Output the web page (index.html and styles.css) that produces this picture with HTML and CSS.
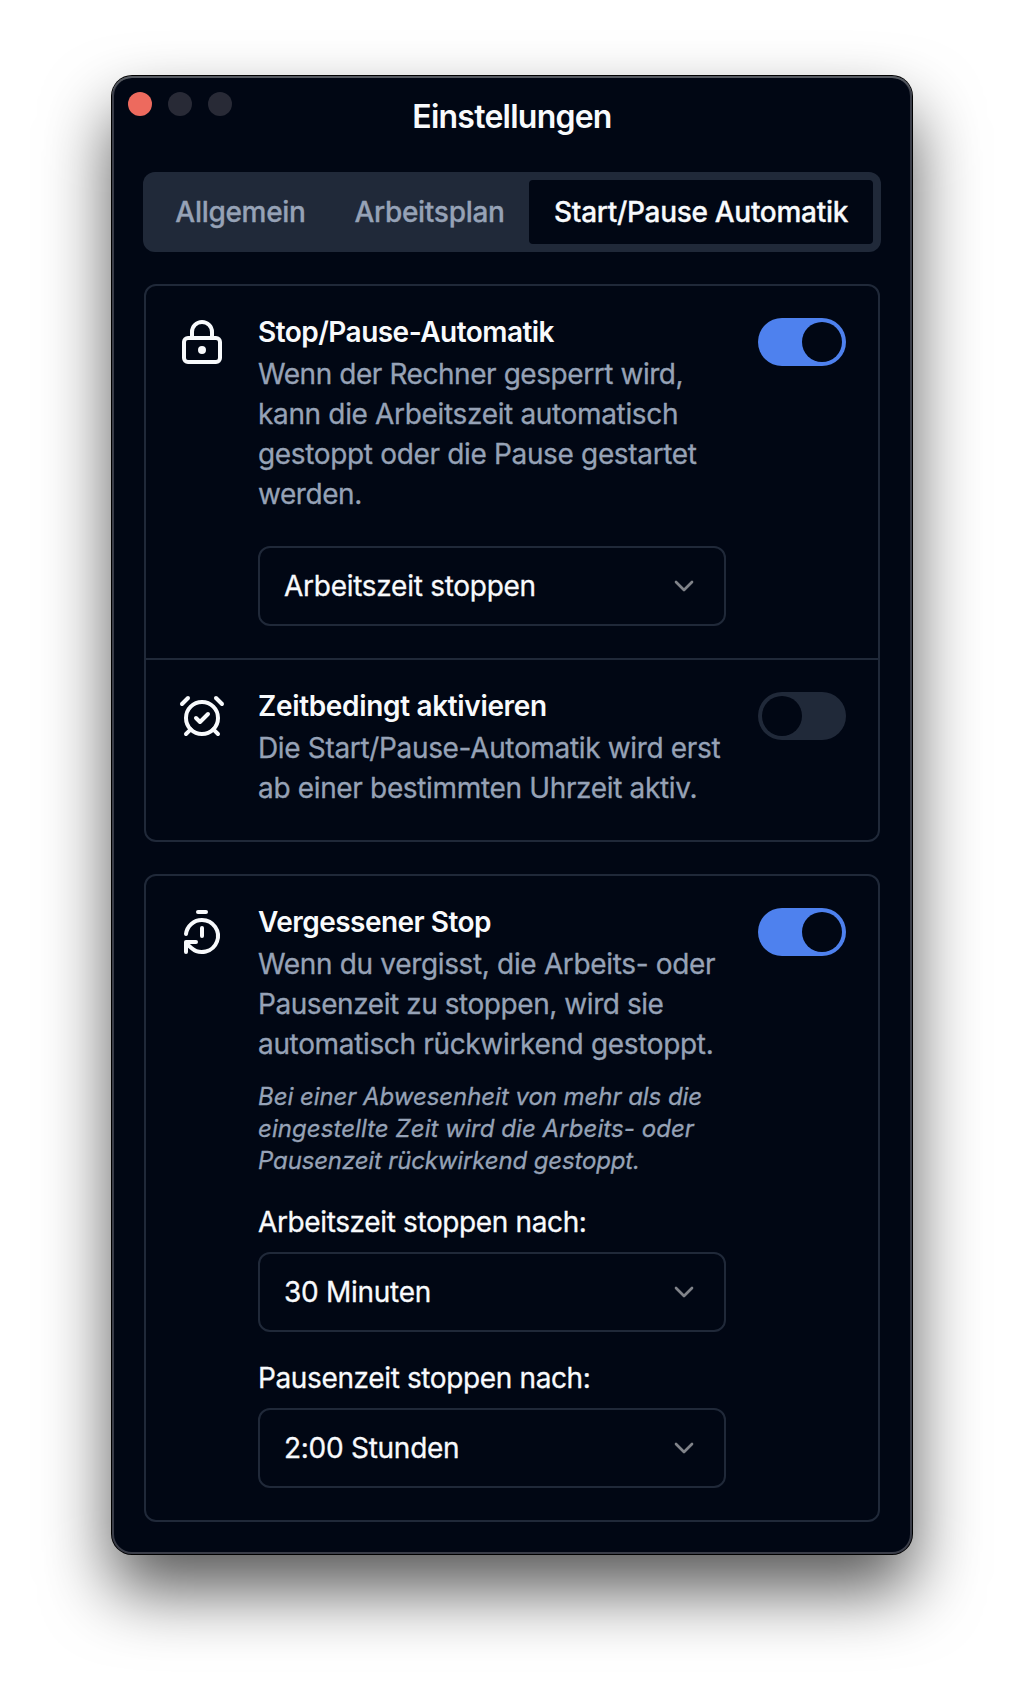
FILE: index.html
```
<!DOCTYPE html>
<html lang="de">
<head>
<meta charset="utf-8">
<title>Einstellungen</title>
<link rel="stylesheet" href="styles.css">
</head>
<body>
<main class="window">
  <div class="controls">
    <span class="dot dot-close"></span><span class="dot"></span><span class="dot"></span>
  </div>
  <h1 class="title">Einstellungen</h1>

  <nav class="tabs">
    <button class="tab">Allgemein</button>
    <button class="tab">Arbeitsplan</button>
    <button class="tab tab-active">Start/Pause Automatik</button>
  </nav>

  <section class="card">
    <div class="item">
      <svg class="icon" viewBox="0 0 24 24"><circle cx="12" cy="16" r="1"/><rect x="3" y="10" width="18" height="12" rx="2"/><path d="M7 10V7a5 5 0 0 1 10 0v3"/></svg>
      <div class="content">
        <h2 class="heading">Stop/Pause-Automatik</h2>
        <p class="text"><span class="line tight">Wenn der Rechner gesperrt wird,</span> <span class="line">kann die Arbeitszeit automatisch</span> <span class="line">gestoppt oder die Pause gestartet</span> <span class="line tight">werden.</span></p>
        <div class="select select-spaced">Arbeitszeit stoppen<svg class="chevron" viewBox="0 0 24 24"><path d="m6 9 6 6 6-6"/></svg></div>
      </div>
      <span class="switch switch-on"><span class="thumb"></span></span>
    </div>
    <div class="item">
      <svg class="icon" viewBox="0 0 24 24"><circle cx="12" cy="13" r="8"/><path d="M5 3 2 6"/><path d="m22 6-3-3"/><path d="M6.38 18.7 4 21"/><path d="M17.64 18.67 20 21"/><path d="m9 13 2 2 4-4"/></svg>
      <div class="content">
        <h2 class="heading heading-wide">Zeitbedingt aktivieren</h2>
        <p class="text"><span class="line">Die Start/Pause-Automatik wird erst</span> <span class="line">ab einer bestimmten Uhrzeit aktiv.</span></p>
      </div>
      <span class="switch"><span class="thumb"></span></span>
    </div>
  </section>

  <section class="card">
    <div class="item">
      <svg class="icon" viewBox="0 0 24 24"><path d="M10 2h4"/><path d="M12 14v-4"/><path d="M4 13a8 8 0 0 1 8-7 8 8 0 1 1-5.3 14L4 17.6"/><path d="M9 17H4v5"/></svg>
      <div class="content">
        <h2 class="heading">Vergessener Stop</h2>
        <p class="text"><span class="line">Wenn du vergisst, die Arbeits- oder</span> <span class="line tight">Pausenzeit zu stoppen, wird sie</span> <span class="line">automatisch rückwirkend gestoppt.</span></p>
        <p class="note"><span class="line">Bei einer Abwesenheit von mehr als die</span> <span class="line note-wide">eingestellte Zeit wird die Arbeits- oder</span> <span class="line note-tight">Pausenzeit rückwirkend gestoppt.</span></p>
        <div class="field">
          <span class="label">Arbeitszeit stoppen nach:</span>
          <div class="select">30 Minuten<svg class="chevron" viewBox="0 0 24 24"><path d="m6 9 6 6 6-6"/></svg></div>
        </div>
        <div class="field">
          <span class="label">Pausenzeit stoppen nach:</span>
          <div class="select">2:00 Stunden<svg class="chevron" viewBox="0 0 24 24"><path d="m6 9 6 6 6-6"/></svg></div>
        </div>
      </div>
      <span class="switch switch-on"><span class="thumb"></span></span>
    </div>
  </section>
</main>
</body>
</html>
```
FILE: styles.css
```
:root {
  --bg: #010714;
  --fg: #f8fafc;
  --muted: #96a2b6;
  --line: #202939;
  --blue: #4e81ee;
}

* { box-sizing: border-box; }

body {
  margin: 0;
  padding: 76px 112px 0;
  height: 1702px;
  overflow: hidden;
  background: #fff;
  font: 400 28px/28px Inter, "Liberation Sans", sans-serif;
  letter-spacing: -0.3px;
  -webkit-text-stroke: 0.3px currentColor;
  color: var(--fg);
}

h1, h2, p { margin: 0; }

.window {
  position: relative;
  width: 800px;
  height: 1478px;
  padding: 25px 32px 0;
  border-radius: 20px;
  background: var(--bg);
  box-shadow:
    inset 0 2px 0 #565a61,
    inset 0 0 0 2px #3a3d48,
    0 0 0 1px #000,
    0 36px 68px rgba(0, 0, 0, 0.66);
}

.controls {
  position: absolute;
  top: 16px;
  left: 16px;
  display: flex;
  gap: 16px;
}

.dot {
  width: 24px;
  height: 24px;
  border-radius: 50%;
  background: #282a36;
}

.dot-close { background: #ed6a5e; }

.title {
  font-size: 32px;
  line-height: 32px;
  font-weight: 600;
  letter-spacing: -0.76px;
  text-align: center;
  -webkit-text-stroke: 0;
}

.tabs {
  display: grid;
  grid-template-columns: 179px 199px 344px;
  height: 80px;
  margin: 39px -1px 32px;
  padding: 8px;
  border-radius: 12px;
  background: var(--line);
}

.tab {
  padding: 0;
  border: 0;
  border-radius: 4px;
  background: none;
  color: var(--muted);
  font: inherit;
  font-weight: 500;
  letter-spacing: -0.3px;
  white-space: nowrap;
}

.tab-active {
  background: var(--bg);
  color: var(--fg);
}

.card {
  margin-bottom: 32px;
  border: 2px solid var(--line);
  border-radius: 12px;
}

.item {
  display: flex;
  align-items: flex-start;
  gap: 32px;
  padding: 32px;
}

.item + .item { border-top: 2px solid var(--line); }

.icon {
  flex: none;
  width: 48px;
  height: 48px;
  fill: none;
  stroke: var(--fg);
  stroke-width: 2;
  stroke-linecap: round;
  stroke-linejoin: round;
}

.content {
  flex: 1;
  min-width: 0;
}

.heading {
  font-size: 28px;
  font-weight: 600;
  letter-spacing: -0.53px;
  -webkit-text-stroke: 0;
}

.heading-wide { letter-spacing: -0.34px; }

.line {
  display: block;
  white-space: nowrap;
}

.text {
  margin-top: 8px;
  line-height: 40px;
  letter-spacing: -0.34px;
  color: var(--muted);
}

.tight { letter-spacing: -0.44px; }

.note {
  margin-top: 17px;
  margin-bottom: -1px;
  font-size: 24px;
  line-height: 32px;
  font-style: italic;
  letter-spacing: -0.05px;
  color: var(--muted);
}

.note-wide { letter-spacing: 0.07px; }
.note-tight { letter-spacing: -0.15px; }

.field { margin-top: 32px; }

.label {
  display: block;
  margin-bottom: 16px;
  letter-spacing: -0.37px;
}

.select {
  display: flex;
  align-items: center;
  justify-content: space-between;
  height: 80px;
  padding: 0 24px;
  border: 2px solid var(--line);
  border-radius: 12px;
  letter-spacing: -0.27px;
}

.select-spaced { margin-top: 32px; }

.chevron {
  width: 32px;
  height: 32px;
  fill: none;
  stroke: #808389;
  stroke-width: 2;
  stroke-linecap: round;
  stroke-linejoin: round;
}

.switch {
  flex: none;
  display: flex;
  width: 88px;
  height: 48px;
  padding: 4px;
  border-radius: 24px;
  background: var(--line);
}

.switch-on {
  justify-content: flex-end;
  background: var(--blue);
}

.thumb {
  width: 40px;
  height: 40px;
  border-radius: 50%;
  background: var(--bg);
}
```
